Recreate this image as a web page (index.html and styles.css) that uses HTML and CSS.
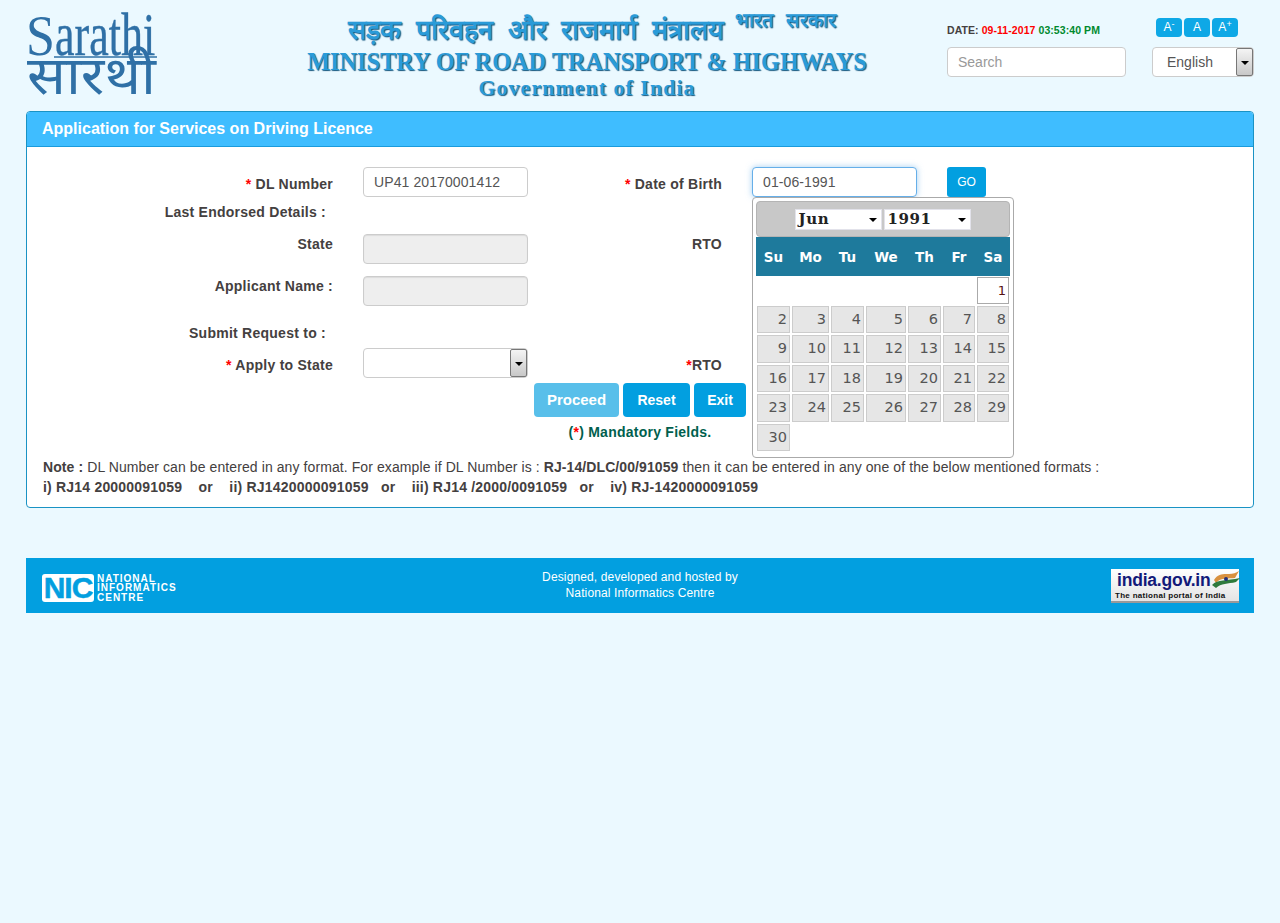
FILE: index.html
```html
<!DOCTYPE html>
<html lang="en">
<head>
<meta charset="utf-8">
<title>Sarathi - Application for Services on Driving Licence</title>
<link rel="stylesheet" href="styles.css">
</head>
<body>
<div class="page">
  <header class="top">
    <svg class="logo" width="131" height="111" viewBox="0 0 131 111">
      <text class="logo-s" transform="translate(0 55) scale(1 1.08)">S</text>
      <text class="logo-lat" transform="translate(29 55) scale(1 1.4)">arathi</text>
      <path class="logo-bar" d="M28 57H131" />
      <text class="logo-dev" transform="translate(1 94) scale(1 1.2)" textLength="129" lengthAdjust="spacingAndGlyphs">सारथी</text>
    </svg>
    <div class="ministry">
      <div class="m-hi"><span>सड़क परिवहन और राजमार्ग मंत्रालय</span><span class="m-hi-sm">भारत सरकार</span></div>
      <div class="m-en">MINISTRY OF ROAD TRANSPORT &amp; HIGHWAYS</div>
      <div class="m-gov">Government of India</div>
    </div>
    <div class="tools">
      <div class="date">DATE: <span class="red">09-11-2017</span> <span class="green">03:53:40 PM</span></div>
      <div class="control search">Search</div>
    </div>
    <div class="tools2">
      <div class="fonts"><span class="fbtn">A<sup>-</sup></span><span class="fbtn">A</span><span class="fbtn">A<sup>+</sup></span></div>
      <div class="control lang">English<span class="arrow"><i></i></span></div>
    </div>
  </header>

  <main class="panel">
    <h1 class="panel-head">Application for Services on Driving Licence</h1>
    <div class="panel-body">
      <div class="row">
        <div class="lbl l1 low"><b class="red">*</b> DL Number</div>
        <div class="control field">UP41 20170001412</div>
        <div class="lbl l2 low"><b class="red">*</b> Date of Birth</div>
        <div class="date-wrap">
          <div class="control field focus">01-06-1991</div>
          <div class="cal">
            <div class="cal-head">
              <span class="cal-sel">Jun<i></i></span>
              <span class="cal-sel">1991<i></i></span>
            </div>
            <div class="cal-days">
              <span>Su</span><span>Mo</span><span>Tu</span><span>We</span><span>Th</span><span>Fr</span><span>Sa</span>
            </div>
            <div class="cal-grid">
              <u></u><u></u><u></u><u></u><u></u><u></u><span class="cur">1</span>
              <span>2</span><span>3</span><span>4</span><span>5</span><span>6</span><span>7</span><span>8</span>
              <span>9</span><span>10</span><span>11</span><span>12</span><span>13</span><span>14</span><span>15</span>
              <span>16</span><span>17</span><span>18</span><span>19</span><span>20</span><span>21</span><span>22</span>
              <span>23</span><span>24</span><span>25</span><span>26</span><span>27</span><span>28</span><span>29</span>
              <span>30</span>
            </div>
          </div>
        </div>
        <div class="go">GO</div>
      </div>
      <div class="row sub">Last Endorsed Details :</div>
      <div class="row gap7">
        <div class="lbl l1">State</div>
        <div class="control field off"></div>
        <div class="lbl l2">RTO</div>
      </div>
      <div class="row gap12">
        <div class="lbl l1">Applicant Name :</div>
        <div class="control field off"></div>
      </div>
      <div class="row sub gap12">Submit Request to :</div>
      <div class="row">
        <div class="lbl l1 low"><b class="red">*</b> Apply to State</div>
        <div class="control field"><span class="arrow"><i></i></span></div>
        <div class="lbl l2 low"><b class="red">*</b>RTO</div>
      </div>
      <div class="actions">
        <span class="btn proceed">Proceed</span>
        <span class="btn reset">Reset</span>
        <span class="btn exit">Exit</span>
      </div>
      <div class="mand">(<span class="red">*</span>) Mandatory Fields.</div>
      <div class="note">
        <div><b>Note :</b> DL Number can be entered in any format. For example if DL Number is : <b>RJ-14/DLC/00/91059</b> then it can be entered in any one of the below mentioned formats :</div>
        <div class="note-b">i) RJ14 20000091059 &nbsp;&nbsp; or &nbsp;&nbsp; ii) RJ1420000091059 &nbsp; or &nbsp;&nbsp; iii) RJ14 /2000/0091059 &nbsp; or &nbsp;&nbsp; iv) RJ-1420000091059</div>
      </div>
    </div>
  </main>

  <footer class="foot">
    <div class="nic">
      <span class="nic-box">NIC</span>
      <span class="nic-txt">NATIONAL<br>INFORMATICS<br>CENTRE</span>
    </div>
    <div class="foot-mid">Designed, developed and hosted by<br>National Informatics Centre</div>
    <div class="india">
      <div class="india-top">india.gov.in<svg class="flag" width="30" height="20" viewBox="0 0 30 20"><path d="M3 10C7 3 14 4 18 4C22 4 25 3 28 1L24 8C18 9 10 7 5 13Z" fill="#d9913f"/><path d="M1 15C7 9 15 11 29 8L25 12C17 14 10 13 5 18Z" fill="#2f7a3c"/><circle cx="15" cy="9" r="2" fill="#23307a"/></svg></div>
      <div class="india-sub">The national portal of India</div>
    </div>
  </footer>
</div>
</body>
</html>
```

FILE: styles.css
```css
* { box-sizing: border-box; }
html, body { margin: 0; padding: 0; }
body {
  background: #ebf9ff;
  font-family: "Liberation Sans", Arial, sans-serif;
  font-size: 14px;
  line-height: 20px;
  color: #444040;
  min-height: 923px;
}
.page { margin: 0 26px; width: 1228px; }
.red { color: #f00; font-weight: inherit; }
.green { color: #008a2e; }

/* header */
.top { display: flex; height: 111px; }
.logo { flex: none; display: block; }
.logo-s { font: 400 52px "Liberation Serif", serif; fill: #2f70a6; }
.logo-lat { font: 400 44px "Liberation Serif", serif; fill: #2f70a6; stroke: #2f70a6; stroke-width: .3; }
.logo-bar { stroke: #2f70a6; stroke-width: 1.5; }
.logo-dev { font: 400 44px "Noto Sans", "DejaVu Sans", sans-serif; fill: #2f70a6; }
.ministry {
  flex: none;
  width: 560px;
  margin-left: 150px;
  color: #2a9bd8;
  font-family: "Liberation Serif", serif;
  font-weight: 700;
  text-shadow: 1px 1px 1px #14577f;
  text-align: center;
}
.m-hi { height: 40px; padding-top: 12px; font-size: 27px; line-height: 36px; word-spacing: 8px; display: flex; justify-content: flex-start; gap: 11px; margin-left: 41px; white-space: nowrap; }
.m-hi-sm { font-size: 20px; line-height: 22px; margin-top: -3px; word-spacing: 8px; }
.m-en { font-size: 24.3px; line-height: 30px; height: 26px; white-space: nowrap; margin-top: 7px; }
.m-gov { font-size: 22px; line-height: 26px; letter-spacing: 1px; margin-top: 2px; }
.tools { flex: none; width: 179px; margin-left: 80px; padding-top: 20px; }
.date { font-size: 10.5px; font-weight: 700; line-height: 20px; height: 27px; white-space: nowrap; letter-spacing: .07px; }
.tools2 { flex: none; width: 102px; margin-left: 26px; padding-top: 18px; }
.fonts { display: flex; gap: 2px; padding-left: 4px; height: 29px; }
.fbtn {
  width: 26px; height: 19px; border-radius: 4px; background: #0ea8e6; color: #fff;
  font-size: 12px; line-height: 19px; text-align: center;
}
.fbtn sup { font-size: 9px; line-height: 0; vertical-align: 4px; }

.control {
  position: relative;
  height: 30px;
  width: 165px;
  background: #fff;
  border: 1px solid #ccc;
  border-radius: 4px;
  padding: 0 10px;
  font-size: 14px;
  line-height: 28px;
  color: #555;
}
.search { width: 179px; color: #999; }
.lang { width: 102px; padding-left: 14px; }
.arrow {
  position: absolute; right: 0; top: 0; width: 17px; height: 28px;
  border: 1px solid #777; border-radius: 2px;
  background: linear-gradient(#f4f4f4, #c8c8c8);
}
.arrow i {
  position: absolute; left: 4px; top: 12px;
  border-top: 4px solid #000; border-left: 4px solid transparent; border-right: 4px solid transparent;
}

/* panel */
.panel { border: 1px solid #1a93c4; border-radius: 4px; background: #fff; height: 397px; }
.panel-head {
  margin: 0; height: 35px; padding: 0 15px;
  background: #3fbdff; border-bottom: 1px solid #1a9bdc;
  border-radius: 3px 3px 0 0;
  color: #fff; font-size: 16px; font-weight: 700; line-height: 33px;
}
.panel-body { padding-top: 20px; }
.row { display: flex; min-height: 30px; font-weight: 700; letter-spacing: .25px; }
.lbl { flex: none; text-align: right; white-space: nowrap; }
.low { padding-top: 7px; }
.l1 { width: 306px; margin-right: 30px; }
.l2 { width: 194px; margin-right: 30px; }
.sub { display: block; width: 299px; text-align: right; line-height: 30px; }
.gap7 { margin-top: 7px; }
.gap12 { margin-top: 12px; }
.field { flex: none; font-weight: 400; letter-spacing: .1px; }
.off { background: #eee; box-shadow: inset 0 1px 1px rgba(0,0,0,.08); }
.focus { border-color: #66afe9; box-shadow: 0 0 6px rgba(102,175,233,.6); }
.date-wrap { position: relative; flex: none; width: 165px; }
.go {
  flex: none; width: 39px; height: 30px; margin-left: 30px;
  background: #029fe0; border-radius: 3px; color: #fff;
  font-size: 12px; font-weight: 400; line-height: 30px; text-align: center; letter-spacing: 0;
}

/* calendar popup */
.cal {
  position: absolute; left: 0; top: 30px; z-index: 2;
  width: 262px; height: 261px; padding: 3px;
  background: #fff; border: 1px solid #aaa; border-radius: 4px;
  font-family: "DejaVu Sans", Verdana, sans-serif; font-weight: 400; letter-spacing: 0;
}
.cal-head {
  height: 36px; background: #c8c8c8; border: 1px solid #b4b4b4; border-radius: 4px;
  display: flex; justify-content: center; gap: 2px; padding-top: 7px; padding-right: 1px;
}
.cal-sel {
  position: relative; width: 87px; height: 21px; padding-left: 3px;
  background: #fff; border: 1px solid #e2e2ea;
  font: 700 15px/19px "DejaVu Serif", serif; color: #222; letter-spacing: .6px;
}
.cal-sel i {
  position: absolute; right: 4px; top: 8px;
  border-top: 4px solid #000; border-left: 4px solid transparent; border-right: 4px solid transparent;
}
.cal-days, .cal-grid {
  display: grid; column-gap: 2px;
  grid-template-columns: 33px 37px 33px 40px 33px 32px 32px;
  padding: 0 1px;
}
.cal-days {
  height: 39px; background: #1e7a9c; color: #fff;
  font-size: 13.5px; font-weight: 700; line-height: 41px; text-align: center;
}
.cal-grid {
  grid-template-rows: 27px 27px 28px 27px 28px 27px; row-gap: 2px; margin-top: 1px;
}
.cal-grid u { display: block; }
.cal-grid span {
  background: #e6e6e6; border: 1px solid #ccc; color: #555;
  font-size: 14.5px; line-height: 25px; text-align: right; padding-right: 2px;
}
.cal-grid .cur { background: #fff; border-color: #aaa; color: #511; font-size: 13px; }

/* actions */
.actions { display: flex; gap: 4px; margin: 5px 0 0 507px; }
.btn {
  height: 34px; border-radius: 4px; background: #029fe0; color: #fff;
  font-weight: 700; line-height: 34px; text-align: center;
}
.proceed { width: 85px; background: #58bfea; font-size: 15px; }
.reset { width: 67px; }
.exit { width: 52px; }
.mand { margin-top: 5px; text-align: center; font-weight: 700; color: #005f4e; letter-spacing: .25px; }
.note { margin-top: 15px; padding-left: 16px; white-space: nowrap; letter-spacing: .09px; }
.note-b { font-weight: 700; letter-spacing: .2px; }

/* footer */
.foot {
  margin-top: 50px; height: 55px; background: #029fe0;
  display: grid; grid-template-columns: 1fr auto 1fr; align-items: center;
  padding: 0 15px; color: #fff;
}
.nic { display: flex; align-items: center; gap: 3px; padding-left: 1px; margin-top: 5px; }
.nic-box {
  width: 52px; height: 28px; background: #fff; color: #029fe0; border-radius: 3px;
  font: 700 30px/28px "Liberation Sans", sans-serif; text-align: center; letter-spacing: -1px;
  -webkit-text-stroke: .5px #029fe0;
}
.nic-txt { font-size: 10px; font-weight: 700; line-height: 9.5px; letter-spacing: 1px; }
.foot-mid { font-size: 12px; line-height: 16px; text-align: center; letter-spacing: .13px; margin-top: -2px; }
.india {
  justify-self: end;
  width: 128px; height: 34px; background: linear-gradient(#fff, #e4e4e4);
  border-bottom: 2px solid #999; color: #131a7a; padding: 1px 0 0 6px;
}
.india-top { display: flex; font-size: 17.5px; font-weight: 700; line-height: 21px; letter-spacing: -.2px; white-space: nowrap; }
.flag { flex: none; }
.india-sub { font-size: 8px; font-weight: 700; line-height: 9px; color: #111; letter-spacing: .3px; margin-left: -2px; white-space: nowrap; }
```
